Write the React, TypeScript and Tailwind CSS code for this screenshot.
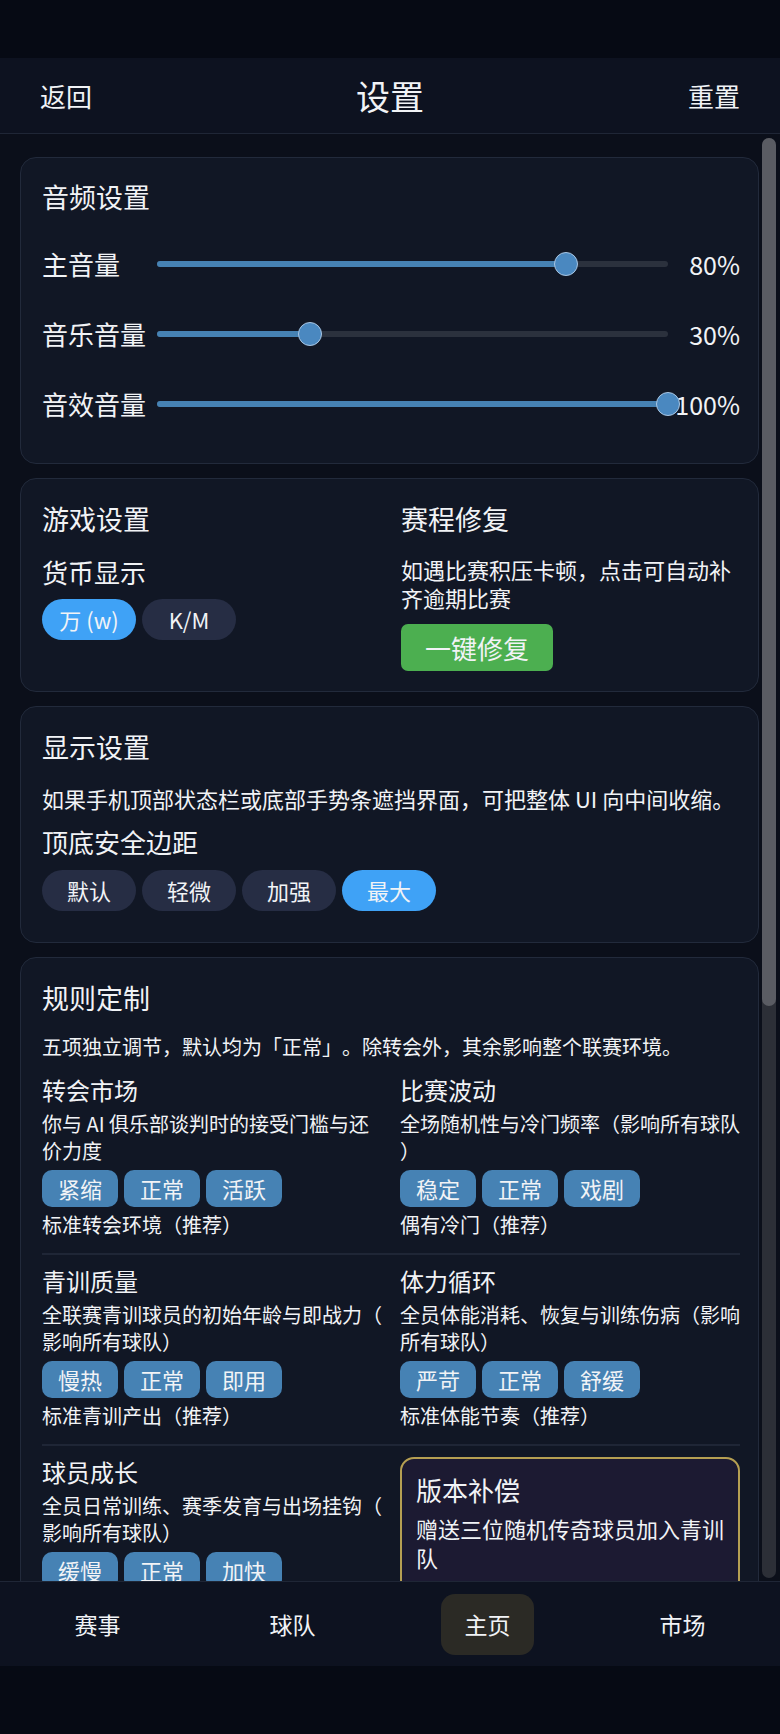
import React from 'react';

const FONT = { fontFamily: '"Noto Sans CJK SC", "Noto Sans", sans-serif' };

// 音量滑块
const volumes = [
  { label: '主音量', value: 80 },
  { label: '音乐音量', value: 30 },
  { label: '音效音量', value: 100 },
];

const rules = [
  [
    {
      title: '转会市场',
      desc: '你与 AI 俱乐部谈判时的接受门槛与还价力度',
      options: ['紧缩', '正常', '活跃'],
      note: '标准转会环境（推荐）',
    },
    {
      title: '比赛波动',
      desc: '全场随机性与冷门频率（影响所有球队）',
      options: ['稳定', '正常', '戏剧'],
      note: '偶有冷门（推荐）',
    },
  ],
  [
    {
      title: '青训质量',
      desc: '全联赛青训球员的初始年龄与即战力（影响所有球队）',
      options: ['慢热', '正常', '即用'],
      note: '标准青训产出（推荐）',
    },
    {
      title: '体力循环',
      desc: '全员体能消耗、恢复与训练伤病（影响所有球队）',
      options: ['严苛', '正常', '舒缓'],
      note: '标准体能节奏（推荐）',
    },
  ],
];

const tabs = ['赛事', '球队', '主页', '市场'];

const Card = ({ children, className = '' }: { children: React.ReactNode; className?: string }) => (
  <div className={`shrink-0 rounded-2xl border border-[#222a3b] bg-[#111725] pl-[21px] pr-[18px] ${className}`}>
    {children}
  </div>
);

const Slider = ({ label, value }: { label: string; value: number }) => (
  <div className="flex h-[40px] items-center">
    <div className="w-[115px] text-[26px] leading-[40px]">{label}</div>
    <div className="relative h-[6px] flex-1 rounded-full bg-[#2b313d]">
      <div className="h-full rounded-full bg-[#4682b4]" style={{ width: `${value}%` }} />
      <div
        className="absolute top-1/2 h-[24px] w-[24px] -translate-x-1/2 -translate-y-1/2 rounded-full border border-[#a9c6e3] bg-[#4a88c0]"
        style={{ left: `${value}%` }}
      />
    </div>
    <div className="w-[72px] text-right text-[25px] leading-[40px]">{value}%</div>
  </div>
);

const Pill = ({ text, active }: { text: string; active?: boolean }) => (
  <div
    className={`flex h-[41px] w-[94px] items-center justify-center rounded-full text-[22px] ${
      active ? 'bg-[#3fa2f6]' : 'bg-[#262d44]'
    }`}
  >
    {text}
  </div>
);

const RuleItem = ({ title, desc, options, note }: { title: string; desc: string; options: string[]; note?: string }) => (
  <div className="min-w-0">
    <div className="text-[24px] leading-[34px]">{title}</div>
    <div className="mt-[3px] text-[20px] leading-[27px] [line-break:anywhere]">{desc}</div>
    <div className="mt-[6px] flex gap-[6px]">
      {options.map((o) => (
        <div key={o} className="flex h-[37px] w-[76px] items-center justify-center rounded-[10px] bg-[#4682b4] text-[22px]">
          {o}
        </div>
      ))}
    </div>
    {note && <div className="mt-[4px] text-[20px] leading-[27px]">{note}</div>}
  </div>
);

export default function App() {
  return (
    <div
      className="flex h-[1734px] w-[780px] flex-col overflow-hidden bg-[#060a14] text-[#f1f3f6] [text-spacing-trim:space-all]"
      style={FONT}
    >
      <div className="h-[58px] shrink-0" />

      {/* 顶部栏 */}
      <header className="flex h-[76px] shrink-0 items-center justify-between border-b border-[#1f2636] bg-[#0d1220] px-10">
        <span className="text-[26px]">返回</span>
        <span className="text-[34px]">设置</span>
        <span className="text-[26px]">重置</span>
      </header>

      <div className="flex min-h-0 flex-1 bg-[#0b0f1a]">
        <div className="flex min-w-0 flex-1 flex-col gap-[14px] overflow-hidden pl-[20px] pt-[23px]">
          {/* 音频设置 */}
          <Card className="pb-[39px] pt-[19px]">
            <div className="text-[27px] leading-[40px]">音频设置</div>
            <div className="mt-[27px] flex flex-col gap-[30px]">
              {volumes.map((v) => (
                <Slider key={v.label} {...v} />
              ))}
            </div>
          </Card>

          {/* 游戏设置 / 赛程修复 */}
          <Card className="pb-[20px] pt-[20px]">
            <div className="grid grid-cols-2 gap-x-[20px]">
              <div>
                <div className="text-[27px] leading-[40px]">游戏设置</div>
                <div className="mt-[13px] text-[26px] leading-[40px]">货币显示</div>
                <div className="mt-[7px] flex gap-[6px]">
                  <Pill text="万 (w)" active />
                  <Pill text="K/M" />
                </div>
              </div>
              <div>
                <div className="text-[27px] leading-[40px]">赛程修复</div>
                <div className="mt-[16px] text-[22px] leading-[28px] [line-break:anywhere]">
                  如遇比赛积压卡顿，点击可自动补齐逾期比赛
                </div>
                <button className="mt-[13px] h-[47px] rounded-[7px] bg-[#4caf50] px-6 text-[26px]">一键修复</button>
              </div>
            </div>
          </Card>

          {/* 显示设置 */}
          <Card className="pb-[31px] pt-[20px]">
            <div className="text-[27px] leading-[40px]">显示设置</div>
            <div className="mt-[17px] text-[22px] leading-[28px]">
              如果手机顶部状态栏或底部手势条遮挡界面，可把整体 UI 向中间收缩。
            </div>
            <div className="mt-[10px] text-[26px] leading-[40px]">顶底安全边距</div>
            <div className="mt-[8px] flex gap-[6px]">
              <Pill text="默认" />
              <Pill text="轻微" />
              <Pill text="加强" />
              <Pill text="最大" active />
            </div>
          </Card>

          {/* 规则定制 */}
          <Card className="pt-[20px]">
            <div className="text-[27px] leading-[40px]">规则定制</div>
            <div className="mt-[15px] text-[20px] leading-[28px]">
              五项独立调节，默认均为「正常」。除转会外，其余影响整个联赛环境。
            </div>
            <div className="mt-[12px]">
              {rules.map((row, i) => (
                <div
                  key={i}
                  className={`grid grid-cols-2 gap-x-[18px] border-b-2 border-[#1f2636] pb-[15px] ${i > 0 ? 'pt-[9px]' : ''}`}
                >
                  {row.map((r) => (
                    <RuleItem key={r.title} {...r} />
                  ))}
                </div>
              ))}
              <div className="grid grid-cols-2 gap-x-[18px] pt-[9px]">
                <RuleItem
                  title="球员成长"
                  desc="全员日常训练、赛季发育与出场挂钩（影响所有球队）"
                  options={['缓慢', '正常', '加快']}
                />
                <div className="mt-[2px] h-[200px] rounded-[14px] border-2 border-[#b59f52] bg-[#1c1a32] px-[14px] pt-[11px]">
                  <div className="text-[26px] leading-[40px]">版本补偿</div>
                  <div className="mt-[4px] text-[22px] leading-[29px] [line-break:anywhere]">
                    赠送三位随机传奇球员加入青训队
                  </div>
                </div>
              </div>
            </div>
          </Card>
        </div>

        {/* 滚动条 */}
        <div className="flex w-[21px] shrink-0 flex-col pb-[3px] pl-[3px] pr-[4px] pt-[4px]">
          <div className="flex flex-1 flex-col rounded-full bg-[#2c2f37]">
            <div className="h-[868px] rounded-full bg-[#5a5c63]" />
          </div>
        </div>
      </div>

      {/* 底部导航 */}
      <nav className="grid h-[85px] shrink-0 grid-cols-4 border-t border-[#1f2636] bg-[#0d1220]">
        {tabs.map((t) => (
          <div key={t} className="flex items-center justify-center">
            <div
              className={`flex h-[61px] w-[93px] items-center justify-center rounded-[14px] text-[23px] ${
                t === '主页' ? 'bg-[#2b2a25]' : ''
              }`}
            >
              {t}
            </div>
          </div>
        ))}
      </nav>

      <div className="h-[68px] shrink-0" />
    </div>
  );
}
